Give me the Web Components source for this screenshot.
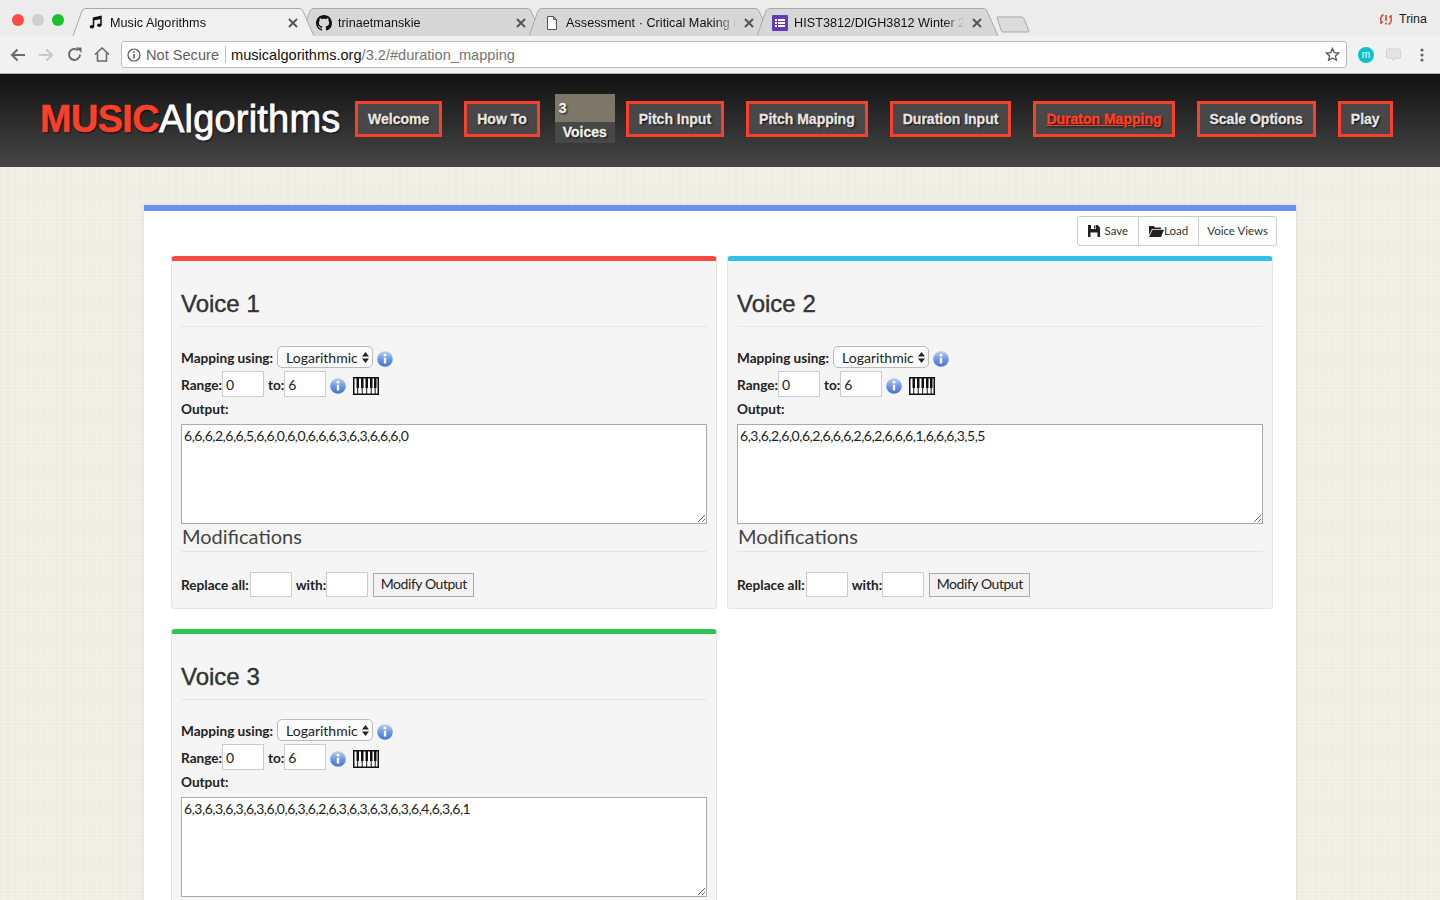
<!DOCTYPE html>
<html>
<head>
<meta charset="utf-8">
<title>Music Algorithms</title>
<style>
  html,body{margin:0;padding:0;height:900px;overflow:hidden;}
  body{font-family:"Liberation Sans",Arial,sans-serif;background-color:#f3f0e8;
    background-image:repeating-linear-gradient(90deg,rgba(120,110,80,.022) 0 2px,transparent 2px 4px,rgba(120,110,80,.014) 4px 5px,transparent 5px 7px),
                     repeating-linear-gradient(0deg,rgba(120,110,80,.022) 0 2px,transparent 2px 4px,rgba(120,110,80,.014) 4px 5px,transparent 5px 7px);}
</style>
</head>
<body>
<browser-bar></browser-bar>
<site-header>
  <nav-btn>Welcome</nav-btn>
  <nav-btn style="margin-left:22px">How To</nav-btn>
  <voice-count style="margin-left:15px"></voice-count>
  <nav-btn style="margin-left:11px">Pitch Input</nav-btn>
  <nav-btn style="margin-left:22px">Pitch Mapping</nav-btn>
  <nav-btn style="margin-left:22px">Duration Input</nav-btn>
  <nav-btn style="margin-left:22px" active>Duraton Mapping</nav-btn>
  <nav-btn style="margin-left:22px">Scale Options</nav-btn>
  <nav-btn style="margin-left:22px">Play</nav-btn>
</site-header>
<main-sheet>
  <voice-panel color="#fb4a45" name="Voice 1" output="6,6,6,2,6,6,5,6,6,0,6,0,6,6,6,3,6,3,6,6,6,0"></voice-panel>
  <voice-panel color="#33c0e8" name="Voice 2" output="6,3,6,2,6,0,6,2,6,6,6,2,6,2,6,6,6,1,6,6,6,3,5,5"></voice-panel>
  <voice-panel color="#2dc653" name="Voice 3" output="6,3,6,3,6,3,6,3,6,0,6,3,6,2,6,3,6,3,6,3,6,3,6,4,6,3,6,1"></voice-panel>
</main-sheet>

<script>
class ChromeTab extends HTMLElement {
  constructor() {
    super();
    this.attachShadow({ mode: 'open' });
    var on = this.hasAttribute('active');
    this.shadowRoot.innerHTML = `
    <style>
    :host{display:block;position:relative;width:241px;height:28px;margin-right:-13px;flex:none;font-size:12.6px;color:#111;z-index:${on?2:1};}
    svg.bg{position:absolute;left:0;top:0;}
    .row{position:relative;display:flex;align-items:center;height:28px;padding:1px 0 0 15px;box-sizing:border-box;}
    .ic{width:16px;height:16px;flex:none;margin-right:6px;display:flex;align-items:center;justify-content:center;}
    .t{width:171px;white-space:nowrap;overflow:hidden;letter-spacing:.05px;
       -webkit-mask-image:linear-gradient(90deg,#000 150px,transparent 171px);}
    .x{flex:none;margin-left:6px;width:12px;height:12px;}
    </style>
    <svg class="bg" width="241" height="28"><path d="M0 28 L9 3 Q10 .5 13 .5 L226 .5 Q229 .5 230 3 L241 28" fill="${on?'#f1f1f1':'#d7d7d7'}" stroke="#a8a8a8"/></svg>
    <div class="row"><span class="ic"><slot name="icon"></slot></span><span class="t"><slot></slot></span>
    <svg class="x" viewBox="0 0 12 12"><path d="M2 2 L10 10 M10 2 L2 10" stroke="#555" stroke-width="2"/></svg></div>`;
  }
}
window.customElements.define('chrome-tab', ChromeTab);

class BrowserBar extends HTMLElement {
  constructor() {
    super();
    this.attachShadow({ mode: 'open' });
    this.shadowRoot.innerHTML = `
    <style>
    :host{display:block;font-family:"Liberation Sans",Arial,sans-serif;background:#f1f1f1;}
    .strip{height:36px;background:#ececec;display:flex;position:relative;}
    .lights{display:flex;align-items:center;gap:8px;width:61px;padding:2px 0 0 12px;height:36px;box-sizing:content-box;flex:none;}
    .lights i{width:12px;height:12px;border-radius:50%;display:block;}
    .tabs{display:flex;padding-top:8px;height:28px;flex:none;}
    .newtab{margin:16px 0 0 11px;flex:none;}
    .who{margin-left:auto;display:flex;align-items:center;gap:6px;font-size:12.5px;color:#222;padding:2px 13px 0 0;height:34px;}
    .tools{height:37px;display:flex;align-items:center;position:relative;border-bottom:1px solid #b4b4b4;box-sizing:content-box;}
    .tb{width:28px;display:flex;justify-content:center;flex:none;}
    .url{width:1219px;height:25px;margin-left:5px;margin-right:7px;background:#fff;border:1px solid #bdbdbd;border-radius:3px;display:flex;align-items:center;flex:none;font-size:14.6px;color:#757575;padding-left:5px;box-sizing:content-box;}
    .url b{font-weight:normal;color:#111;}
    .sep{width:1px;height:17px;background:#bdbdbd;margin:0 5px 0 6px;}
    .url svg.i{margin-right:5px;}
    .star{margin-left:auto;margin-right:6px;}
    .m{width:16px;height:16px;border-radius:50%;background:#10c0c8;color:#e8ffff;font-size:10px;line-height:15px;text-align:center;}
    </style>
    <div class="strip">
      <div class="lights"><i style="background:#fc4b45"></i><i style="background:#cfcfcf"></i><i style="background:#16c32c"></i></div>
      <div class="tabs">
        <chrome-tab active><svg slot="icon" width="14" height="15" viewBox="0 0 14 15"><path d="M4.5 11.5 V3 L12 1.5 V10" fill="none" stroke="#111" stroke-width="1.5"/><path d="M4.5 3 L12 1.5 V4 L4.5 5.5Z" fill="#111"/><ellipse cx="2.9" cy="11.7" rx="2.2" ry="1.8" fill="#111"/><ellipse cx="10.3" cy="10.3" rx="2.2" ry="1.8" fill="#111"/></svg>Music Algorithms</chrome-tab>
        <chrome-tab><svg slot="icon" width="16" height="16" viewBox="0 0 16 16"><path fill="#111" d="M8 0C3.58 0 0 3.58 0 8c0 3.54 2.29 6.53 5.47 7.59.4.07.55-.17.55-.38 0-.19-.01-.82-.01-1.49-2.01.37-2.53-.49-2.69-.94-.09-.23-.48-.94-.82-1.13-.28-.15-.68-.52-.01-.53.63-.01 1.08.58 1.23.82.72 1.21 1.87.87 2.33.66.07-.52.28-.87.51-1.07-1.78-.2-3.64-.89-3.64-3.95 0-.87.31-1.59.82-2.15-.08-.2-.36-1.02.08-2.12 0 0 .67-.21 2.2.82.64-.18 1.32-.27 2-.27s1.36.09 2 .27c1.53-1.04 2.2-.82 2.2-.82.44 1.1.16 1.92.08 2.12.51.56.82 1.27.82 2.15 0 3.07-1.87 3.75-3.65 3.95.29.25.54.73.54 1.48 0 1.07-.01 1.93-.01 2.2 0 .21.15.46.55.38A8.01 8.01 0 0 0 16 8c0-4.42-3.58-8-8-8z"/></svg>trinaetmanskie</chrome-tab>
        <chrome-tab><svg slot="icon" width="12" height="14" viewBox="0 0 12 14"><path d="M1.5 .5 H7.5 L10.5 3.5 V13.5 H1.5Z M7.5 .5 V3.5 H10.5" fill="#fff" stroke="#555"/></svg>Assessment · Critical Making in the Digital</chrome-tab>
        <chrome-tab><svg slot="icon" width="16" height="16" viewBox="0 0 16 16"><rect width="16" height="16" rx="1" fill="#673ab7"/><path d="M3 4h2v2H3zM6 4h7v2H6zM3 7h2v2H3zM6 7h7v2H6zM3 10h2v2H3zM6 10h7v2H6z" fill="#fff"/></svg>HIST3812/DIGH3812 Winter 2018 Course</chrome-tab>
      </div>
      <svg class="newtab" width="34" height="17"><path d="M1 1 H25 Q27 1 28 3 L33 15 Q33 16 31 16 H7 Q6 16 5 14 Z" fill="#dcdcdc" stroke="#a8a8a8"/></svg>
      <div class="who"><svg width="14" height="13" viewBox="0 0 14 13"><path d="M4.5 1.5 A5.5 5.5 0 0 0 3 10 M3 10 H1 M3 10 V8 M9.5 11.5 A5.5 5.5 0 0 0 11 3 M11 3 H13 M11 3 V5" fill="none" stroke="#e0492c" stroke-width="1.5"/><path d="M7 2v6M7 9.5v2" stroke="#e0492c" stroke-width="1.6"/></svg>Trina</div>
    </div>
    <div class="tools">
      <span class="tb" style="margin-left:4px"><svg width="16" height="14" viewBox="0 0 16 14"><path d="M15 7H2M7.5 1.5 2 7l5.5 5.5" fill="none" stroke="#6b6b6b" stroke-width="2"/></svg></span>
      <span class="tb"><svg width="16" height="14" viewBox="0 0 16 14"><path d="M1 7h13M8.5 1.5 14 7l-5.5 5.5" fill="none" stroke="#c8c8c8" stroke-width="2"/></svg></span>
      <span class="tb"><svg width="15" height="15" viewBox="0 0 15 15"><path d="M13 7.5A5.5 5.5 0 1 1 11 3.2" fill="none" stroke="#6b6b6b" stroke-width="2"/><path d="M9 .5 H14.5 V6 Z" fill="#6b6b6b"/></svg></span>
      <span class="tb"><svg width="16" height="15" viewBox="0 0 16 15"><path d="M1 7.5 8 1l7 6.5M3.5 6v8h9V6" fill="none" stroke="#6b6b6b" stroke-width="1.6"/></svg></span>
      <div class="url">
        <svg class="i" width="14" height="14" viewBox="0 0 14 14"><circle cx="7" cy="7" r="6" fill="none" stroke="#555" stroke-width="1.2"/><path d="M7 6v4.5M7 3.2v1.6" stroke="#555" stroke-width="1.5"/></svg>
        <span style="color:#5f5f5f">Not Secure</span><span class="sep"></span><b>musicalgorithms.org</b>/3.2/#duration_mapping
        <svg class="star" width="15" height="15" viewBox="0 0 15 15"><path d="M7.5 1.5 9.3 5.6l4.4.4-3.3 2.9 1 4.3-3.9-2.3-3.9 2.3 1-4.3L1.3 6l4.4-.4Z" fill="none" stroke="#555" stroke-width="1.3"/></svg>
      </div>
      <span class="tb" style="width:24px;margin-left:0"><span class="m">m</span></span>
      <span class="tb" style="width:31px"><svg width="15" height="14" viewBox="0 0 15 14"><path d="M1.5 1H13.5Q14.5 1 14.5 2V9Q14.5 10 13.5 10H9L7.5 12.5 6 10H1.5Q.5 10 .5 9V2Q.5 1 1.5 1Z" fill="#e4e4e4" stroke="#d2d2d2"/></svg></span>
      <span class="tb" style="width:25px"><svg width="4" height="14" viewBox="0 0 4 14"><circle cx="2" cy="2" r="1.6" fill="#666"/><circle cx="2" cy="7" r="1.6" fill="#666"/><circle cx="2" cy="12" r="1.6" fill="#666"/></svg></span>
    </div>`;
  }
}
window.customElements.define('browser-bar', BrowserBar);

class NavBtn extends HTMLElement {
  constructor() {
    super();
    this.attachShadow({ mode: 'open' });
    var on = this.hasAttribute('active');
    this.shadowRoot.innerHTML = `
    <style>
    :host{display:block;flex:none;box-sizing:border-box;height:36px;border:3px solid #fb402a;background:#484848;padding:0 10px;
      font:bold 14px/31px "Liberation Sans",Arial,sans-serif;color:${on?'#fb402a':'#e6e6e6'};-webkit-text-stroke:.3px ${on?'#fb402a':'#e6e6e6'};text-shadow:1px 1px 2px #000;white-space:nowrap;
      text-decoration:${on?'underline':'none'};}
    </style><slot></slot>`;
  }
}
window.customElements.define('nav-btn', NavBtn);

class VoiceCount extends HTMLElement {
  constructor() {
    super();
    this.attachShadow({ mode: 'open' });
    this.shadowRoot.innerHTML = `
    <style>
    :host{display:block;flex:none;width:60px;height:49px;background:#484848;
      font:bold 14px "Liberation Sans",Arial,sans-serif;color:#f0f0f0;-webkit-text-stroke:.3px #f0f0f0;text-shadow:1px 1px 2px #000;}
    .n{height:28px;background:#7d776a;line-height:28px;padding-left:4px;}
    .l{text-align:center;line-height:21px;height:21px;}
    </style><div class="n">3</div><div class="l">Voices</div>`;
  }
}
window.customElements.define('voice-count', VoiceCount);

class SiteHeader extends HTMLElement {
  constructor() {
    super();
    this.attachShadow({ mode: 'open' });
    this.shadowRoot.innerHTML = `
    <style>
    :host{display:flex;align-items:center;box-sizing:border-box;height:93px;padding:0 0 4px 40px;background:linear-gradient(#111,#464646);font-family:"Liberation Sans",Arial,sans-serif;}
    .logo{flex:none;width:315px;margin-top:2px;font-size:38px;font-weight:bold;color:#fff;white-space:nowrap;text-shadow:1px 1px 2px #000;}
    .logo span{color:#fb402a;letter-spacing:-.7px;-webkit-text-stroke:.5px #fb402a;}
    .logo em{font-style:normal;font-weight:normal;letter-spacing:.2px;-webkit-text-stroke:.8px #fff;}
    </style>
    <div class="logo"><span>MUSIC</span><em>Algorithms</em></div><slot></slot>`;
  }
}
window.customElements.define('site-header', SiteHeader);

class MainSheet extends HTMLElement {
  constructor() {
    super();
    this.attachShadow({ mode: 'open' });
    this.shadowRoot.innerHTML = `
    <style>
    :host{display:block;box-sizing:border-box;width:1152px;margin:38px 0 0 144px;background:#fff;border-top:6px solid #6a8ff7;padding:5px 23px 40px 27px;
      font-family:Lato,"Liberation Sans",sans-serif;color:#333;box-shadow:0 0 3px rgba(0,0,0,.12);}
    .bar{display:flex;justify-content:flex-end;margin:0 -4px 10px 0;}
    .grp{display:flex;height:30px;box-sizing:border-box;border:1px solid #ccc;border-radius:3px;font-size:11.5px;line-height:28px;color:#333;}
    .grp span{display:flex;align-items:center;padding:0 10px;border-left:1px solid #ccc;white-space:nowrap;}
    .grp span:first-child{border-left:0;}
    .grp span:last-child{padding:0 8px;}
    .grid{display:grid;grid-template-columns:546px 546px;column-gap:10px;row-gap:20px;}
    </style>
    <div class="bar"><div class="grp">
      <span><svg width="12" height="12" viewBox="0 0 12 12" style="margin-right:4px"><path d="M0 0H9.5L12 2.5V12H0Z" fill="#222"/><path d="M3 0H8V4H3Z" fill="#fff"/><path d="M6 .6H7.4V3.4H6Z" fill="#222"/><path d="M2.5 7.5H9.5V12H2.5Z" fill="#fff"/></svg>Save</span>
      <span><svg width="15" height="12" viewBox="0 0 15 12"><path d="M0 1H5L6 2.5H12V4H3L0 10Z" fill="#222"/><path d="M3.5 4.8H15L12 12H0Z" fill="#222"/></svg>Load</span>
      <span>Voice Views</span>
    </div></div>
    <div class="grid"><slot></slot></div>`;
  }
}
window.customElements.define('main-sheet', MainSheet);

class InfoDot extends HTMLElement {
  constructor() {
    super();
    this.attachShadow({ mode: 'open' });
    this.shadowRoot.innerHTML = `
    <style>:host{display:inline-block;width:16px;height:16px;flex:none;}</style>
    <svg width="16" height="16" viewBox="0 0 16 16"><defs><linearGradient id="g" x1="0" y1="0" x2="0" y2="1"><stop offset="0" stop-color="#bcd0f2"/><stop offset=".55" stop-color="#6b93e2"/><stop offset="1" stop-color="#3f74d8"/></linearGradient></defs>
    <circle cx="8" cy="8" r="7.8" fill="url(#g)"/><path d="M8 6.8V12.5" stroke="#fff" stroke-width="2.4"/><circle cx="8" cy="4.2" r="1.4" fill="#fff"/></svg>`;
  }
}
window.customElements.define('info-dot', InfoDot);

class VoicePanel extends HTMLElement {
  constructor() {
    super();
    this.attachShadow({ mode: 'open' });
    var c = this.getAttribute('color');
    var n = this.getAttribute('name');
    var o = this.getAttribute('output');
    this.shadowRoot.innerHTML = `
    <style>
    :host{display:block;box-sizing:border-box;height:353px;background:#f5f5f5;border:1px solid #e3e3e3;border-top:5px solid ${c};border-radius:4px 4px 3px 3px;padding:0 9px;
      font-family:Lato,"Liberation Sans",sans-serif;font-size:14px;color:#222;}
    h2{margin:0;height:66px;box-sizing:border-box;padding-top:28px;font:500 24px/30px "Liberation Sans",Arial,sans-serif;color:#333;border-bottom:1px solid #e6e6e6;-webkit-text-stroke:.4px #333;}
    .row{display:flex;align-items:center;}
    b{font-weight:bold;white-space:nowrap;font-size:13.6px;}
    .low b{padding-top:2px;}
    .sel{display:flex;align-items:center;justify-content:space-between;box-sizing:border-box;width:96px;height:22px;margin-left:4px;border:1px solid #bbb;border-radius:5px;background:#fbfbfb;padding:0 3px 0 8px;}
    input{box-sizing:border-box;width:42px;height:26px;border:1px solid #ccc;background:#fff;padding:0 3px;font:14px Lato,"Liberation Sans",sans-serif;color:#222;margin:0;outline:0;}
    textarea{display:block;box-sizing:border-box;width:526px;height:100px;margin:0;border:1px solid #aaa;background:#fff;padding:2px 2px;font:14px Lato,"Liberation Sans",sans-serif;letter-spacing:-.49px;color:#222;outline:0;}
    h4{margin:0;height:27px;font:normal 20px/24px Lato,"Liberation Sans",sans-serif;color:#444;border-bottom:1px solid #e6e6e6;padding-left:1px;}
    button{box-sizing:border-box;width:101px;height:24px;margin-left:5px;border:1px solid #aaa;background:#f2f2f2;padding:0 0 2px;font:14px Lato,"Liberation Sans",sans-serif;letter-spacing:-.45px;color:#222;}
    </style>
    <h2><slot>${n}</slot></h2>
    <div class="row low" style="margin-top:19px;height:22px"><b>Mapping using:</b><div class="sel"><span>Logarithmic</span>
      <svg width="7" height="11" viewBox="0 0 7 11"><path d="M3.5 0 7 4.4H0ZM3.5 11 0 6.6H7Z" fill="#222"/></svg></div><info-dot style="margin-left:4px;margin-top:3px"></info-dot></div>
    <div class="row low" style="margin-top:3px;height:26px"><b>Range:</b><input value="0"><b style="margin-left:4px">to:</b><input value="6">
      <info-dot style="margin-left:4px;margin-top:3px"></info-dot>
      <svg style="margin-left:7px;margin-top:3px" width="26" height="18" viewBox="0 0 26 18"><rect x=".75" y=".75" width="24.5" height="16.5" fill="#fff" stroke="#111" stroke-width="1.5"/><path d="M3.5 1H6v10H3.5zM8 1h2.5v10H8zM12.5 1H15v10h-2.5zM17 1h2.5v10H17zM21 1h2.5v10H21z" fill="#111"/><path d="M4.7 11v6M9.2 11v6M13.7 11v6M18.2 11v6M22.2 11v6" stroke="#111"/></svg></div>
    <div class="row low" style="margin-top:1px;height:20px"><b>Output:</b></div>
    <textarea style="margin-top:6px">${o}</textarea>
    <h4>Modifications</h4>
    <div class="row" style="margin-top:20px;height:25px"><b>Replace all:</b><input style="height:25px;margin-left:1px"><b style="margin-left:4px">with:</b><input style="height:25px"><button>Modify Output</button></div>`;
  }
}
window.customElements.define('voice-panel', VoicePanel);
</script>
</body>
</html>
